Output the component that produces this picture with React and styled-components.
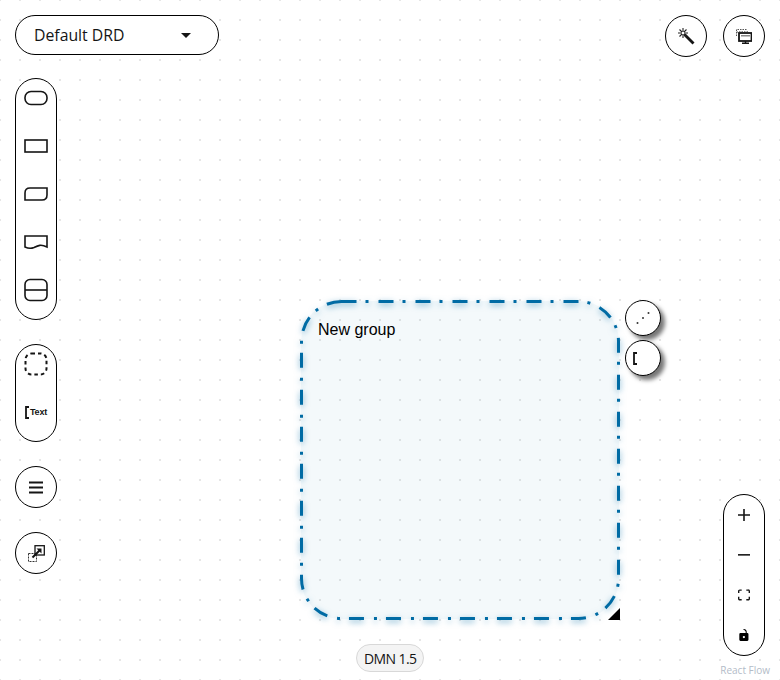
import styled, { createGlobalStyle } from 'styled-components'

const GlobalStyle = createGlobalStyle`
html, body {
  margin: 0;
  padding: 0;
  background: #fff;
}
`

const Canvas = styled.div`
position: relative;
width: 780px;
height: 680px;
overflow: hidden;
display: flex;
justify-content: space-between;
box-sizing: border-box;
padding: 15px;
font-family: "Open Sans", "Noto Sans", "Liberation Sans", sans-serif;
color: #151515;
background-color: #fff;
background-image: radial-gradient(circle, #e6e6e6 1px, transparent 1.1px);
background-size: 20px 20px;
background-position: -10px -10px;
`
const LeftColumn = styled.div`
display: flex;
flex-direction: column;
align-items: flex-start;
gap: 24px;
`
const RightColumn = styled.div`
display: flex;
flex-direction: column;
justify-content: space-between;
align-items: flex-end;
`
const TopActions = styled.div`
display: flex;
gap: 16px;
`
const DrdSelect = styled.div`
width: 204px;
height: 40px;
box-sizing: border-box;
margin-bottom: -1px;
padding: 0 27px 0 18px;
display: flex;
align-items: center;
justify-content: space-between;
background: #fff;
border: 1px solid #000;
border-radius: 20px;
font-size: 15.8px;
`
const Caret = styled.span`
width: 0;
height: 0;
border-left: 5px solid transparent;
border-right: 5px solid transparent;
border-top: 5px solid #151515;
`
const Pill = styled.div`
width: 42px;
box-sizing: border-box;
display: flex;
flex-direction: column;
align-items: center;
gap: 10px;
padding-bottom: 10px;
background: #fff;
border: 1px solid #000;
border-radius: 21px;
`
const PillItem = styled.div`
width: 40px;
height: 38px;
flex: none;
display: flex;
align-items: center;
justify-content: center;
`
const RoundButton = styled.div`
width: 42px;
height: 42px;
box-sizing: border-box;
display: flex;
align-items: center;
justify-content: center;
background: #fff;
border: 1px solid #000;
border-radius: 50%;
`
const TextTool = styled.div`
display: flex;
align-items: center;
gap: 1px;
font-size: 9px;
font-weight: 700;
letter-spacing: -0.2px;
font-family: "Liberation Sans", sans-serif;
`
const ZoomPanel = styled(Pill)`
gap: 0;
height: 162px;
padding: 0;
`
const ZoomItem = styled(PillItem)`
height: 40px;
`
const BottomRight = styled.div`
display: flex;
flex-direction: column;
align-items: flex-end;
`
const Attribution = styled.div`
margin: 7px -5px -12px 0;
font-size: 10px;
line-height: 14px;
color: #b3bcc8;
`
const VersionBadge = styled.div`
position: absolute;
left: 356px;
top: 644px;
height: 28px;
box-sizing: border-box;
padding: 0 7px;
display: flex;
align-items: center;
background: #f4f4f4;
border: 1px solid #d8d8d8;
border-radius: 14px;
font-size: 14px;
letter-spacing: -0.6px;
`
const GroupNode = styled.div`
position: absolute;
left: 300px;
top: 300px;
width: 320px;
height: 320px;
`
const GroupFill = styled.div`
position: absolute;
inset: 1px;
border-radius: 40px;
background: rgba(0, 107, 164, 0.045);
`
const GroupShape = styled.svg`
position: absolute;
left: 0;
top: 0;
overflow: visible;
filter: drop-shadow(0 2px 3px rgba(0, 107, 164, 0.55));
`
const GroupLabel = styled.div`
position: absolute;
left: 18px;
top: 20px;
font-family: "Liberation Sans", Arial, sans-serif;
font-size: 16px;
line-height: 19px;
color: #000;
`
const ResizeHandle = styled.div`
position: absolute;
right: 0;
bottom: 0;
width: 0;
height: 0;
border-left: 12px solid transparent;
border-bottom: 12px solid #000;
`
const NodeAction = styled.div`
position: absolute;
left: 625px;
top: ${p => p.$top}px;
width: 36px;
height: 36px;
box-sizing: border-box;
padding-left: ${p => p.$inset || 0}px;
display: flex;
align-items: center;
justify-content: ${p => p.$inset ? 'flex-start' : 'center'};
background: #fff;
border: 1px solid #000;
border-radius: 50%;
box-shadow: 4px 4px 4px #777;
`

const shapeProps = { fill: 'none', stroke: '#151515', strokeWidth: 1.6 }

const InputIcon = () => (
  <svg width="24" height="16" viewBox="0 0 24 16">
    <rect x="1" y="1.500" width="22" height="13" rx="6" {...shapeProps} />
  </svg>
)
const DecisionIcon = () => (
  <svg width="24" height="16" viewBox="0 0 24 16">
    <rect x="1" y="2" width="22" height="12" {...shapeProps} />
  </svg>
)
const BkmIcon = () => (
  <svg width="24" height="16" viewBox="0 0 24 16">
    <path d="M6 2H23V9Q23 14 18 14H1V7Q1 2 6 2Z" {...shapeProps} />
  </svg>
)
const KnowledgeIcon = () => (
  <svg width="24" height="16" viewBox="0 0 24 16">
    <path d="M1 2H23V13C17 10 14 11.500 10 13.500C6.500 15 3 14 1 13Z" {...shapeProps} />
  </svg>
)
const ServiceIcon = () => (
  <svg width="24" height="24" viewBox="0 0 24 24">
    <rect x="1" y="1.500" width="22" height="21" rx="5" {...shapeProps} />
    <path d="M1 12H23" {...shapeProps} />
  </svg>
)
const GroupIcon = () => (
  <svg width="24" height="24" viewBox="0 0 24 24">
    <rect x="1.500" y="1.500" width="21" height="21" rx="6" fill="none" stroke="#151515" strokeWidth="2" strokeDasharray="3.500 3" />
  </svg>
)
const BracketIcon = ({ height = 13 }) => (
  <svg width="4" height={height} viewBox={`0 0 4 ${height}`}>
    <path d={`M4 1H1V${height - 1}H4`} fill="none" stroke="#151515" strokeWidth="1.800" />
  </svg>
)
const HamburgerIcon = () => (
  <svg width="14" height="13" viewBox="0 0 14 13">
    <path d="M0 1.500H14M0 6.500H14M0 11.500H14" stroke="#151515" strokeWidth="2.200" />
  </svg>
)
const AlignIcon = () => (
  <svg width="17" height="17" viewBox="0 0 17 17">
    <rect x="7" y="0.700" width="9.300" height="9.300" fill="none" stroke="#151515" strokeWidth="1.300" />
    <rect x="0.500" y="8.500" width="8" height="8" fill="none" stroke="#333" strokeWidth="1" strokeDasharray="2 1" />
    <path d="M4.500 12.500L11.500 5.500" stroke="#151515" strokeWidth="2" />
    <path d="M8.500 3.500H13.500V8.500Z" fill="#151515" />
  </svg>
)
const WandIcon = () => (
  <svg width="17" height="17" viewBox="0 0 17 17">
    <path d="M6.500 6.500L15.500 15.500" stroke="#151515" strokeWidth="2.800" />
    <path d="M5 0V10M0 5H10M1.500 1.500L8.500 8.500M8.500 1.500L1.500 8.500" stroke="#222" strokeWidth="1.100" />
    <circle cx="5" cy="5" r="1.300" fill="#fff" />
  </svg>
)
const OverlaysIcon = () => (
  <svg width="16" height="15" viewBox="0 0 16 15">
    <path d="M0.500 7V0.500H11M0.500 3H3" fill="none" stroke="#555" strokeWidth="1" strokeDasharray="1.500 1" />
    <path d="M3 2.500H12" stroke="#666" strokeWidth="0.800" strokeDasharray="1.500 1" />
    <rect x="3" y="4" width="12.500" height="8" fill="#fff" stroke="#151515" strokeWidth="1.800" />
    <path d="M5 6H14V7.500H5Z" fill="#888" />
    <path d="M9.500 12V13.500M6 14.300H13" stroke="#151515" strokeWidth="1.400" />
  </svg>
)
const PlusIcon = () => (
  <svg width="12" height="12" viewBox="0 0 32 32">
    <path d="M32 18.133H18.133V32h-4.266V18.133H0v-4.266h13.867V0h4.266v13.867H32z" fill="#151515" />
  </svg>
)
const MinusIcon = () => (
  <svg width="12" height="2" viewBox="0 0 32 5">
    <path d="M0 0h32v4.200H0z" fill="#151515" />
  </svg>
)
const FitIcon = () => (
  <svg width="12" height="12" viewBox="0 0 32 30">
    <path d="M3.692 4.630c0-.530.400-.938.939-.938h5.215V0H4.708C2.130 0 0 2.054 0 4.630v5.216h3.692V4.631zM27.354 0h-5.200v3.692h5.170c.530 0 .984.400.984.939v5.215H32V4.631A4.624 4.624 0 0027.354 0zm.954 24.830c0 .532-.400.940-.939.940h-5.215v3.768h5.215c2.577 0 4.631-2.130 4.631-4.707v-5.139h-3.692v5.139zm-23.677.940c-.531 0-.939-.400-.939-.940v-5.138H0v5.139c0 2.577 2.130 4.707 4.708 4.707h5.138V25.770H4.631z" fill="#151515" />
  </svg>
)
const UnlockIcon = () => (
  <svg width="10" height="12" viewBox="0 0 25 32">
    <path d="M21.333 10.667H19.810V7.619C19.810 3.429 16.380 0 12.190 0c-4.114 1.828-1.370 2.133.305 2.438 1.676.305 4.420 2.590 4.420 5.181v3.048H3.047A3.056 3.056 0 000 13.714v15.238A3.056 3.056 0 003.048 32h18.285a3.056 3.056 0 003.048-3.048V13.714a3.056 3.056 0 00-3.048-3.047zM12.190 24.533a3.056 3.056 0 01-3.047-3.047 3.056 3.056 0 013.047-3.048 3.056 3.056 0 013.048 3.048 3.056 3.056 0 01-3.048 3.047z" fill="#000" />
  </svg>
)
const EdgeIcon = () => (
  <svg width="16" height="16" viewBox="0 0 16 16">
    <circle cx="2.500" cy="13" r="1" fill="#333" />
    <circle cx="8" cy="8" r="1" fill="#333" />
    <circle cx="13.500" cy="3" r="1" fill="#333" />
  </svg>
)

const paletteNodes = [InputIcon, DecisionIcon, BkmIcon, KnowledgeIcon, ServiceIcon]

function App() {
  return (
    <Canvas>
      <GlobalStyle />
      <LeftColumn>
        <DrdSelect>Default DRD<Caret /></DrdSelect>
        <Pill>
          {paletteNodes.map((Icon, i) => <PillItem key={i}><Icon /></PillItem>)}
        </Pill>
        <Pill>
          <PillItem><GroupIcon /></PillItem>
          <PillItem>
            <TextTool><BracketIcon />Text</TextTool>
          </PillItem>
        </Pill>
        <RoundButton><HamburgerIcon /></RoundButton>
        <RoundButton><AlignIcon /></RoundButton>
      </LeftColumn>

      <RightColumn>
        <TopActions>
          <RoundButton><WandIcon /></RoundButton>
          <RoundButton><OverlaysIcon /></RoundButton>
        </TopActions>
        <BottomRight>
          <ZoomPanel>
            <ZoomItem><PlusIcon /></ZoomItem>
            <ZoomItem><MinusIcon /></ZoomItem>
            <ZoomItem><FitIcon /></ZoomItem>
            <ZoomItem><UnlockIcon /></ZoomItem>
          </ZoomPanel>
          <Attribution>React Flow</Attribution>
        </BottomRight>
      </RightColumn>

      <GroupNode>
        <GroupFill />
        <GroupShape width="320" height="320" viewBox="0 0 320 320">
          <rect
            x="1.500"
            y="1.500"
            width="317"
            height="317"
            rx="40"
            fill="none"
            stroke="#006ba4"
            strokeWidth="3"
            strokeDasharray="15 9 3 10"
          />
        </GroupShape>
        <GroupLabel>New group</GroupLabel>
        <ResizeHandle />
      </GroupNode>
      <NodeAction $top={300}><EdgeIcon /></NodeAction>
      <NodeAction $top={340} $inset={7}><BracketIcon /></NodeAction>

      <VersionBadge>DMN 1.5</VersionBadge>
    </Canvas>
  )
}

export default App
